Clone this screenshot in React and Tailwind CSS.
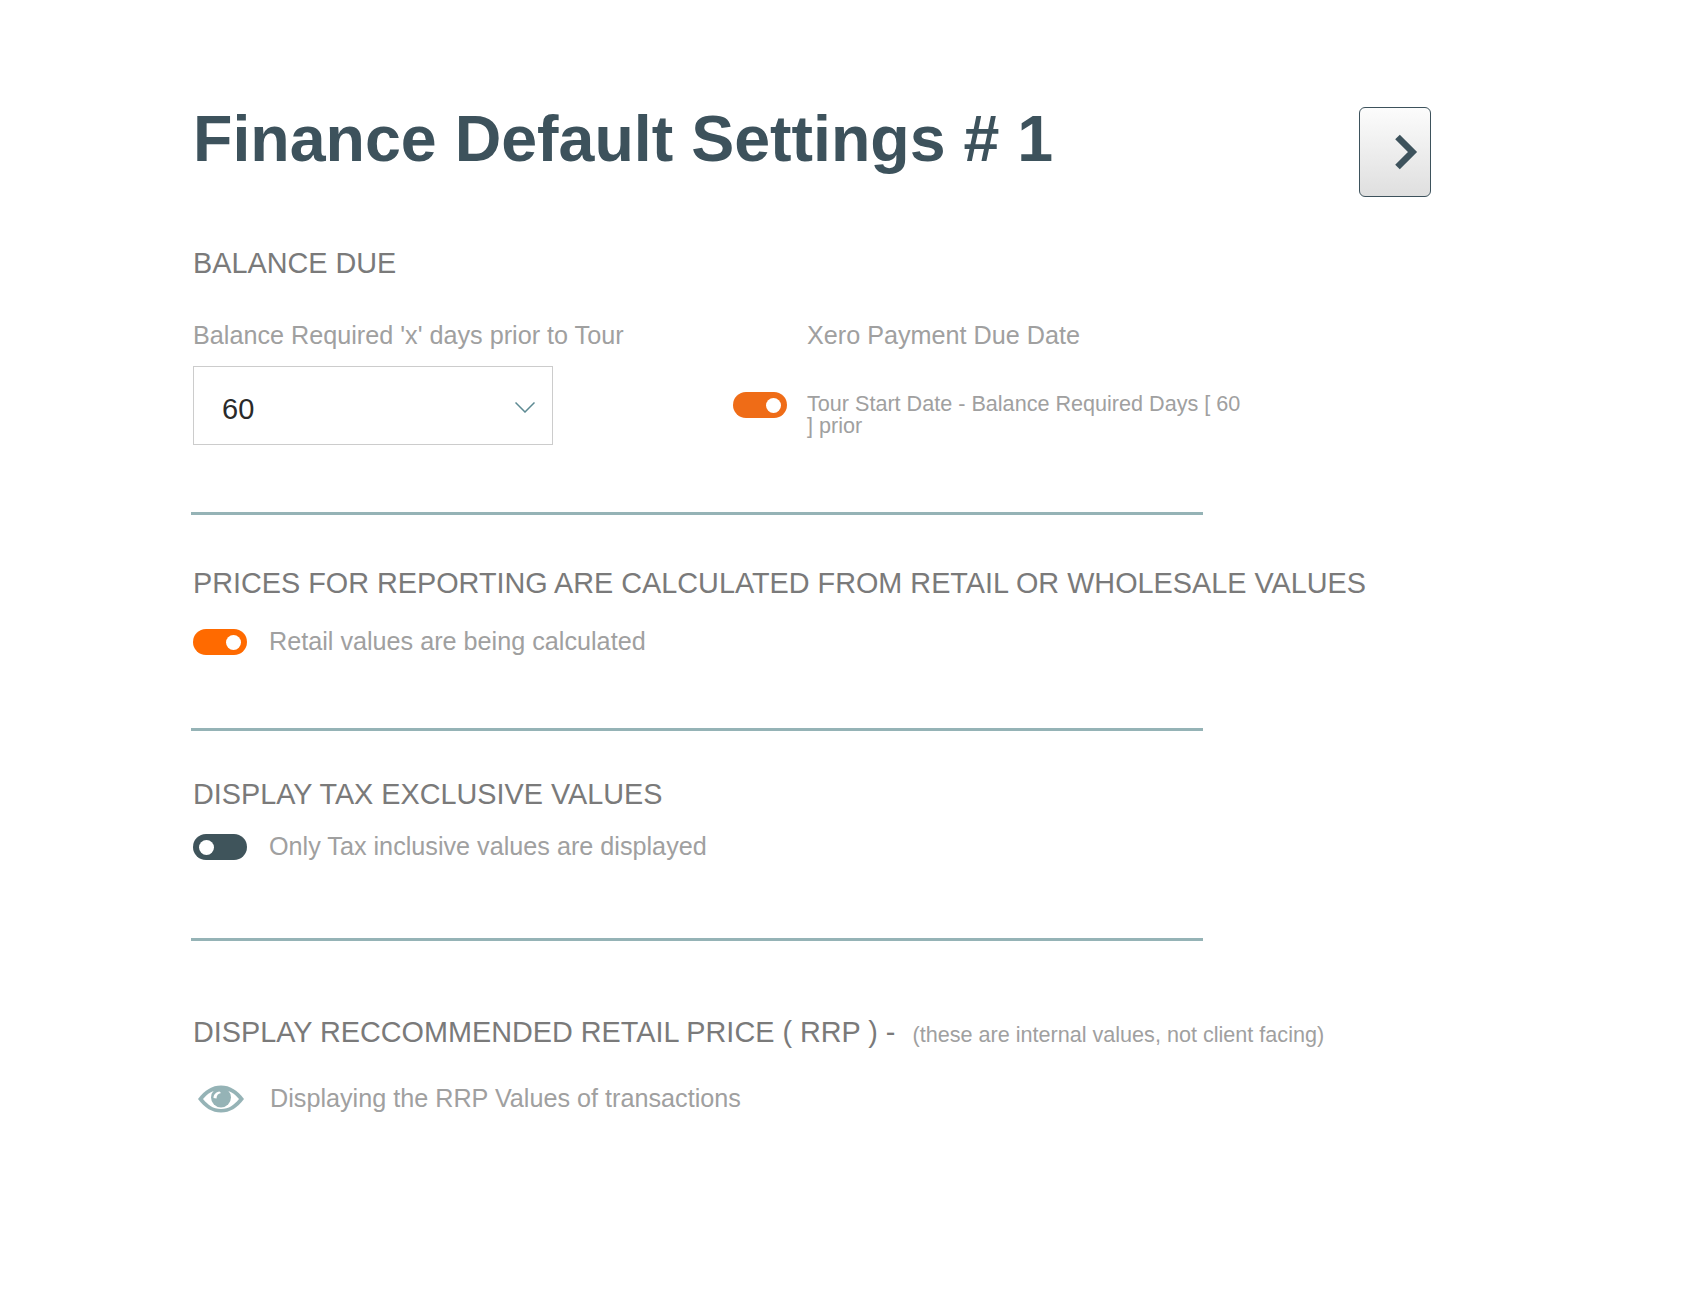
import React from 'react';

const Toggle = ({ on = true, color = 'bg-[#ff6a00]' }) => (
  <div className={`flex h-[26px] w-[54px] shrink-0 items-center rounded-full px-[6px] ${color} ${on ? 'justify-end' : 'justify-start'}`}>
    <div className="h-[15px] w-[15px] rounded-full bg-white" />
  </div>
);

const Divider = () => <div className="ml-[-2px] h-[3px] w-[1012px] bg-[#95b3b6]" />;

const Heading = ({ children, className = '' }) => (
  <h2 className={`text-[28.8px] leading-[32px] text-[#7a7a7a] ${className}`}>{children}</h2>
);

export default function App() {
  return (
    <div className="min-h-[1294px] bg-white pl-[193px] font-['Liberation_Sans',Arial,sans-serif]">
      <div className="flex w-[1238px] items-start justify-between pt-[107px]">
        <h1 className="text-[64.5px] font-bold leading-[64px] text-[#3d525c]">Finance Default Settings # 1</h1>
        <button className="flex h-[90px] w-[72px] items-center justify-end rounded-[6px] border border-[#3d525c] bg-gradient-to-b from-[#fcfcfc] to-[#dfdfdf] pr-[12px]">
          <svg width="24" height="36" viewBox="0 0 24 36" fill="none">
            <path d="M3.500 3 L18.500 18 L3.500 33" stroke="#3d525c" strokeWidth="6.500" />
          </svg>
        </button>
      </div>

      <Heading className="mt-[50px]">BALANCE DUE</Heading>

      <div className="mt-[42px] flex">
        <div className="w-[540px]">
          <p className="text-[25.2px] leading-[28px] text-[#a0a0a0]">Balance Required 'x' days prior to Tour</p>
          <div className="mt-[17px] flex h-[79px] w-[360px] items-center justify-between border border-[#cccccc] pl-[28px] pr-[17px]">
            <span className="pt-[8px] text-[29px] text-[#2a2a2a]">60</span>
            <svg width="20" height="11" viewBox="0 0 20 11" fill="none" className="mt-[3px]">
              <path d="M0.500 0.500 L10 10 L19.500 0.500" stroke="#5d8a93" strokeWidth="1.500" />
            </svg>
          </div>
        </div>
        <div>
          <p className="ml-[74px] text-[25.2px] leading-[28px] text-[#a0a0a0]">Xero Payment Due Date</p>
          <div className="mt-[43px] flex items-start gap-[20px]">
            <Toggle color="bg-[#ef6c17]" />
            <p className="w-[440px] pt-[1px] text-[21.6px] leading-[22px] text-[#a0a0a0]">Tour Start Date - Balance Required Days [ 60 ] prior</p>
          </div>
        </div>
      </div>

      <div className="mt-[67px]"><Divider /></div>

      <Heading className="mt-[52px]">PRICES FOR REPORTING ARE CALCULATED FROM RETAIL OR WHOLESALE VALUES</Heading>
      <div className="mt-[30px] flex h-[26px] items-center gap-[22px]">
        <Toggle />
        <p className="mb-[2px] text-[25.2px] leading-[28px] text-[#a0a0a0]">Retail values are being calculated</p>
      </div>

      <div className="mt-[73px]"><Divider /></div>

      <Heading className="mt-[47px]">DISPLAY TAX EXCLUSIVE VALUES</Heading>
      <div className="mt-[24px] flex h-[26px] items-center gap-[22px]">
        <Toggle on={false} color="bg-[#3f545b]" />
        <p className="mb-[3px] text-[25.2px] leading-[28px] text-[#a0a0a0]">Only Tax inclusive values are displayed</p>
      </div>

      <div className="mt-[78px]"><Divider /></div>

      <div className="mt-[75px] flex items-baseline gap-[17px]">
        <Heading>DISPLAY RECCOMMENDED RETAIL PRICE ( RRP ) -</Heading>
        <span className="text-[21.6px] text-[#a0a0a0]">(these are internal values, not client facing)</span>
      </div>
      <div className="mt-[34px] flex h-[28px] items-center gap-[26px] pl-[5px]">
        <svg width="46" height="28" viewBox="0 0 46 28" className="shrink-0">
          <path fill="#95b3b6" d="M0 14 C7 5 14 0.500 23 0.500 C32 0.500 39 5 46 14 C39 23 32 27.500 23 27.500 C14 27.500 7 23 0 14 Z" />
          <path fill="#ffffff" d="M5 14 C10 8 15 5 23 5 C31 5 36 8 41 14 C36 20 31 24 23 24 C15 24 10 20 5 14 Z" />
          <circle cx="23" cy="12.500" r="10" fill="#95b3b6" />
          <path fill="#ffffff" d="M15.500 13 C15.500 9.500 18 7 21.500 6.500 L23 8 C20 8.500 18.500 10.500 18.500 13.500 Z" />
        </svg>
        <p className="mb-[3px] text-[25.2px] leading-[28px] text-[#a0a0a0]">Displaying the RRP Values of transactions</p>
      </div>
    </div>
  );
}
